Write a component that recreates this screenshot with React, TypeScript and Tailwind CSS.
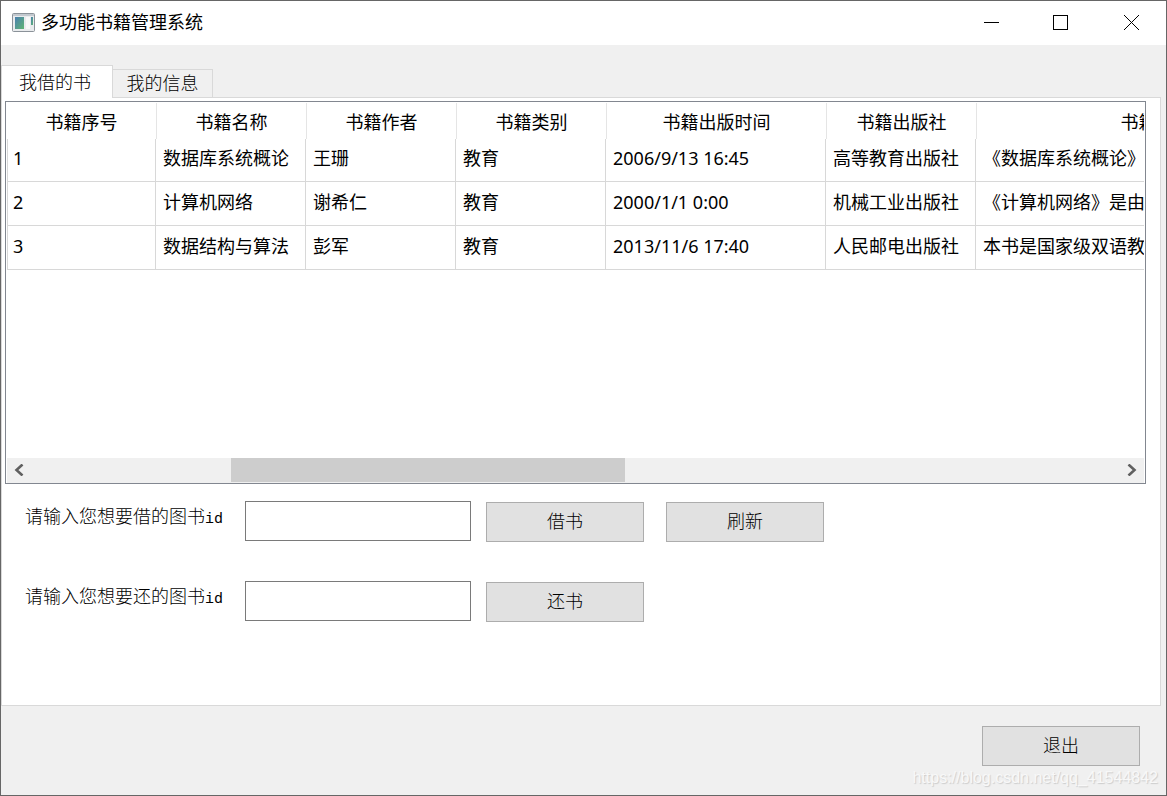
import { useState } from "react";

const columns = [
  { title: "书籍序号", width: "w-[149px]" },
  { title: "书籍名称", width: "w-[150px]" },
  { title: "书籍作者", width: "w-[150px]" },
  { title: "书籍类别", width: "w-[150px]" },
  { title: "书籍出版时间", width: "w-[220px]" },
  { title: "书籍出版社", width: "w-[150px]" },
  { title: "书籍简介", width: "w-[360px]" },
];

const books = [
  ["1", "数据库系统概论", "王珊", "教育", "2006/9/13 16:45", "高等教育出版社", "《数据库系统概论》"],
  ["2", "计算机网络", "谢希仁", "教育", "2000/1/1 0:00", "机械工业出版社", "《计算机网络》是由"],
  ["3", "数据结构与算法", "彭军", "教育", "2013/11/6 17:40", "人民邮电出版社", "本书是国家级双语教"],
];

const tabs = ["我借的书", "我的信息"];

// scroll range of the book table
const scroll = { total: 1089, start: 200, size: 394 };

function AppIcon() {
  return (
    <svg width="23" height="19" viewBox="0 0 23 19" aria-hidden="true">
      <defs>
        <linearGradient id="screen" x1="0" y1="0" x2="1" y2="1">
          <stop offset="0" stopColor="#4a7fb0" />
          <stop offset="1" stopColor="#5fb573" />
        </linearGradient>
      </defs>
      <rect x="0.5" y="0.5" width="22" height="18" rx="1" fill="#e9ebed" stroke="#8b9299" />
      <rect x="1" y="1" width="21" height="2" fill="#c3c9cf" />
      <rect x="3" y="4" width="9" height="12" fill="url(#screen)" />
      <rect x="14" y="4" width="4" height="12" fill="#f8f8f8" />
      <rect x="19" y="4" width="2" height="8" fill="url(#screen)" />
    </svg>
  );
}

function TitleBar() {
  return (
    <header className="flex h-11 items-center bg-white pb-0.5 pl-[11px]">
      <AppIcon />
      <h1 className="ml-1.5 flex-1 text-[18px] leading-6">多功能书籍管理系统</h1>
      <button type="button" aria-label="最小化" className="flex h-10 w-[70px] items-center justify-center">
        <svg width="15" height="15" shapeRendering="crispEdges">
          <path d="M0 7.5H15" stroke="black" />
        </svg>
      </button>
      <button type="button" aria-label="最大化" className="flex h-10 w-[70px] items-center justify-center">
        <svg width="16" height="15" shapeRendering="crispEdges">
          <rect x="0.5" y="0.5" width="14" height="14" fill="none" stroke="black" />
        </svg>
      </button>
      <button type="button" aria-label="关闭" className="flex h-10 w-[70px] items-center justify-center">
        <svg width="15" height="15">
          <path d="M0 0L15 15M15 0L0 15" stroke="black" />
        </svg>
      </button>
    </header>
  );
}

function BookTable() {
  return (
    <div className="flex h-[383px] flex-col border border-[#828790] px-px pt-px">
      <div className="flex-1 overflow-hidden">
        <table className="w-[1329px] table-fixed border-separate border-spacing-0 text-[18px] leading-6">
          <thead>
            <tr className="h-9">
              {columns.map((column) => (
                <th
                  key={column.title}
                  className={`${column.width} border-l border-[#e5e5e5] p-0 pt-px text-center font-normal first:border-l-0`}
                >
                  {column.title}
                </th>
              ))}
            </tr>
          </thead>
          <tbody>
            {books.map((book) => (
              <tr key={book[0]} className="h-11 first:h-[43px]">
                {book.map((value, i) => (
                  <td
                    key={i}
                    className="whitespace-nowrap border-b border-r border-[#d8d8d8] p-0 pb-1 pl-[7px] first:border-l first:pl-[5px]"
                  >
                    {value}
                  </td>
                ))}
              </tr>
            ))}
          </tbody>
        </table>
      </div>
      <div className="flex h-[25px] bg-[#f0f0f0] pb-px">
        <button type="button" aria-label="向左滚动" className="flex w-6 items-center justify-center">
          <svg width="10" height="12">
            <path d="M8.5 0.5L2.5 6L8.5 11.5" fill="none" stroke="#606060" strokeWidth="2.6" />
          </svg>
        </button>
        <div className="flex-1">
          <div
            className="h-6 bg-[#cdcdcd]"
            style={{
              marginLeft: `${(scroll.start / scroll.total) * 100}%`,
              width: `${(scroll.size / scroll.total) * 100}%`,
            }}
          ></div>
        </div>
        <button type="button" aria-label="向右滚动" className="flex w-6 items-center justify-center">
          <svg width="10" height="12">
            <path d="M1.5 0.5L7.5 6L1.5 11.5" fill="none" stroke="#606060" strokeWidth="2.6" />
          </svg>
        </button>
      </div>
    </div>
  );
}

function PushButton({ children }: { children: string }) {
  return (
    <button
      type="button"
      className="h-10 w-[158px] border border-[#adadad] bg-[#e1e1e1] pb-0.5 text-[18px] font-light leading-6"
    >
      {children}
    </button>
  );
}

function BookIdRow({ id, label, actions }: { id: string; label: string; actions: string[] }) {
  return (
    <div className="flex items-start">
      <label htmlFor={id} className="w-[220px] pt-[3px] text-[18px] font-light leading-6">
        {label}
        <span className="font-['Liberation_Mono',monospace] text-[15px]">id</span>
      </label>
      <input id={id} type="text" className="h-10 w-[226px] border border-[#7a7a7a] bg-white px-2 outline-none" />
      <div className="ml-[15px] mt-px flex gap-[22px]">
        {actions.map((action) => (
          <PushButton key={action}>{action}</PushButton>
        ))}
      </div>
    </div>
  );
}

export default function App() {
  const [activeTab, setActiveTab] = useState(0);

  return (
    <div className="relative flex min-h-screen flex-col border border-[#666666] bg-[#f0f0f0] font-['Noto_Sans','Noto_Sans_CJK_SC',sans-serif] text-black">
      <TitleBar />
      <main className="flex flex-1 flex-col pr-[5px] pt-5">
        <div role="tablist" className="flex items-end">
          {tabs.map((tab, i) => (
            <button
              key={tab}
              type="button"
              role="tab"
              aria-selected={activeTab === i}
              onClick={() => setActiveTab(i)}
              className={
                activeTab === i
                  ? "z-10 -mb-px h-[33px] w-28 border border-b-0 border-[#d9d9d9] bg-white pb-px pr-1 text-[18px] font-light leading-6"
                  : "h-7 w-[100px] border border-b-0 border-l-0 border-[#d9d9d9] bg-[#f0f0f0] pb-0.5 text-[18px] font-light leading-6"
              }
            >
              {tab}
            </button>
          ))}
        </div>
        <section className="flex-1 border border-[#d9d9d9] bg-white pl-[3px] pr-[14px] pt-[3px]">
          <BookTable />
          <form action="#" className="flex flex-col gap-[39px] pl-5 pt-[17px]">
            <BookIdRow id="borrow-id" label="请输入您想要借的图书" actions={["借书", "刷新"]} />
            <BookIdRow id="return-id" label="请输入您想要还的图书" actions={["还书"]} />
          </form>
        </section>
      </main>
      <footer className="flex h-[89px] justify-end pr-[26px] pt-5">
        <PushButton>退出</PushButton>
      </footer>
      <span className="pointer-events-none absolute bottom-[7px] right-2 font-['Liberation_Sans',sans-serif] text-[16px] leading-5 text-[#f8f8f8] [text-shadow:1px_1px_1px_#cccccc]">
        https://blog.csdn.net/qq_41544842
      </span>
    </div>
  );
}
